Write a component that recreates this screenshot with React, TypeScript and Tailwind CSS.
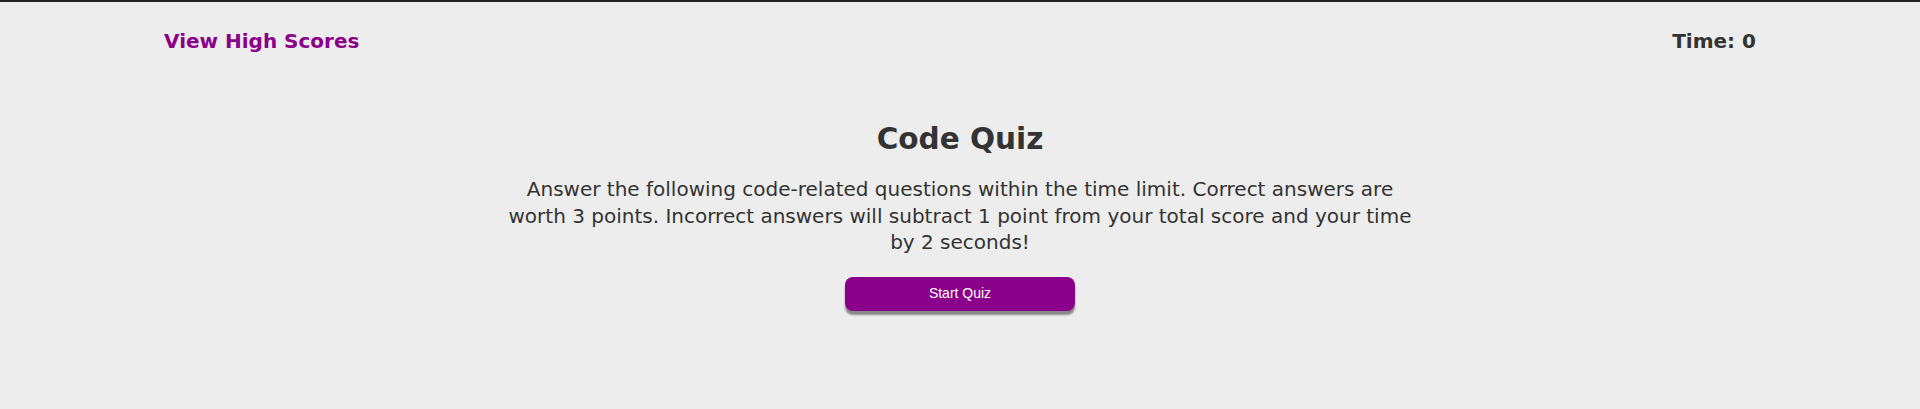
export default function App() {
  return (
    <div className="min-h-[409px] bg-[#ededed] border-t-2 border-[#222] font-['DejaVu_Sans',Verdana,sans-serif] text-[#333]">
      <header className="flex items-start justify-between px-[164px] pt-[28px]">
        <a href="#" className="text-[20px] font-bold leading-[23px] text-[#8b008b]">
          View High Scores
        </a>
        <div className="text-[20px] font-bold leading-[23px]">Time: 0</div>
      </header>

      <main className="flex flex-col items-center mt-[69px]">
        <h1 className="text-[29.5px] font-bold leading-[34px]">Code Quiz</h1>
        <p className="mt-[20px] w-[920px] text-center text-[20px] leading-[26.5px]">
          Answer the following code-related questions within the time limit. Correct answers are
          worth 3 points. Incorrect answers will subtract 1 point from your total score and your
          time by 2 seconds!
        </p>
        <button className="mt-[21px] w-[230px] h-[34px] rounded-[8px] bg-[#8b008b] text-white text-[14px] font-['Liberation_Sans',Arial,sans-serif] shadow-[0_4px_2px_#888]">
          Start Quiz
        </button>
      </main>
    </div>
  );
}
